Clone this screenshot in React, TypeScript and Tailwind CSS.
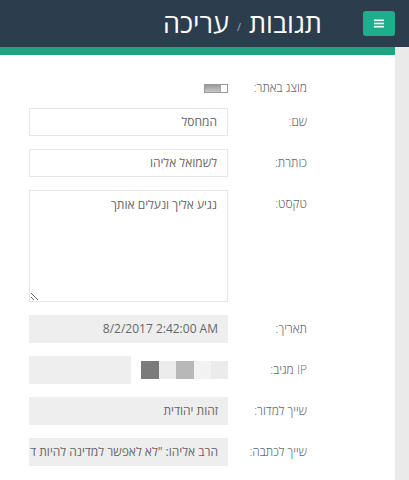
import React from "react";

const font = { fontFamily: '"Open Sans", "Liberation Sans", "DejaVu Sans", sans-serif' };

function Row({ label, children, top = false }: { label: string; children: React.ReactNode; top?: boolean }) {
  return (
    <div className={`flex ${top ? "items-start" : "items-center"}`}>
      <div className="w-[79px] h-[28px] flex items-center text-[12px] text-[#6a6a6a] font-light">{label}</div>
      <div className="w-[199px]">{children}</div>
    </div>
  );
}

function Input({ value, disabled = false, ltr = false }: { value: string; disabled?: boolean; ltr?: boolean }) {
  return (
    <div
      className={`h-[28px] flex items-center justify-start pr-[10px] text-[12px] text-[#666] whitespace-nowrap overflow-hidden ${
        disabled ? "bg-[#eeeeee]" : "bg-white border border-[#e6e6e6]"
      }`}
    >
      {ltr ? <span dir="ltr">{value}</span> : value}
    </div>
  );
}

export default function App() {
  return (
    <div className="w-[409px] h-[480px] overflow-hidden bg-white flex flex-col" style={font}>
      <header className="h-[47px] bg-[#2c3d4d] flex items-center justify-end pr-[14px] shrink-0" dir="ltr">
        <div dir="rtl" className="flex items-center text-white text-[27px] leading-none mr-[41px] mb-[2px]">
          <span>תגובות</span>
          <span className="text-[11px] text-[#aab] mx-[8px] mt-[8px]">/</span>
          <span>עריכה</span>
        </div>
        <button className="w-[32px] h-[25px] rounded-[3px] bg-[#1fae8b] flex items-center justify-center mb-[1px]">
          <svg width="10" height="9" viewBox="0 0 10 9">
            <rect x="0" y="0.5" width="10" height="1.6" fill="white" />
            <rect x="0" y="3.7" width="10" height="1.6" fill="white" />
            <rect x="0" y="6.9" width="10" height="1.6" fill="white" />
          </svg>
        </button>
      </header>
      <div className="flex flex-1">
        <main className="w-[395px] flex flex-col">
          <div className="h-[8px] bg-[#1ea385]" />
          <div dir="rtl" className="pr-[88px] pt-[19px] flex flex-col gap-[13px]">
            <div className="flex items-center h-[28px] -mb-[7px]">
              <div className="w-[79px] text-[12px] text-[#6a6a6a] font-light">מוצג באתר:</div>
              <div className="w-[199px] flex justify-start" dir="rtl">
                <div dir="ltr" className="w-[24px] h-[9px] border border-[#999] flex bg-white">
                  <div className="w-[15px] h-full bg-gradient-to-b from-[#999] to-[#c8c8c8]" />
                  <div className="flex-1 bg-white border-l border-[#aaa]" />
                </div>
              </div>
            </div>
            <Row label="שם:">
              <Input value="המחסל" />
            </Row>
            <Row label="כותרת:">
              <Input value="לשמואל אליהו" />
            </Row>
            <Row label="טקסט:" top>
              <textarea
                defaultValue="נגיע אליך ונעלים אותך"
                className="block w-[199px] h-[112px] border border-[#e6e6e6] px-[10px] pt-[5px] text-[12px] text-[#666] resize outline-none"
                style={font}
              />
            </Row>
            <Row label="תאריך:">
              <Input value="8/2/2017 2:42:00 AM" disabled ltr />
            </Row>
            <Row label="IP מגיב:">
              <div dir="ltr" className="h-[28px] flex items-center">
                <div className="w-[105px] h-[28px] bg-[#eeeeee]" />
                <div className="w-[10px]" />
                <div className="w-[18px] h-[18px] bg-[#7b7b7b]" />
                <div className="w-[18px] h-[18px] bg-[#ececec]" />
                <div className="w-[18px] h-[18px] bg-[#b8b8b8]" />
                <div className="w-[18px] h-[18px] bg-[#f2f2f2]" />
                <div className="w-[17px] h-[18px] bg-[#ebebeb]" />
              </div>
            </Row>
            <Row label="שייך למדור:">
              <Input value="זהות יהודית" disabled />
            </Row>
            <Row label="שייך לכתבה:">
              <Input value={'הרב אליהו: "לא לאפשר למדינה להיות ד'} disabled />
            </Row>
          </div>
        </main>
        <div className="flex-1 bg-[#eaeaea]" />
      </div>
    </div>
  );
}
